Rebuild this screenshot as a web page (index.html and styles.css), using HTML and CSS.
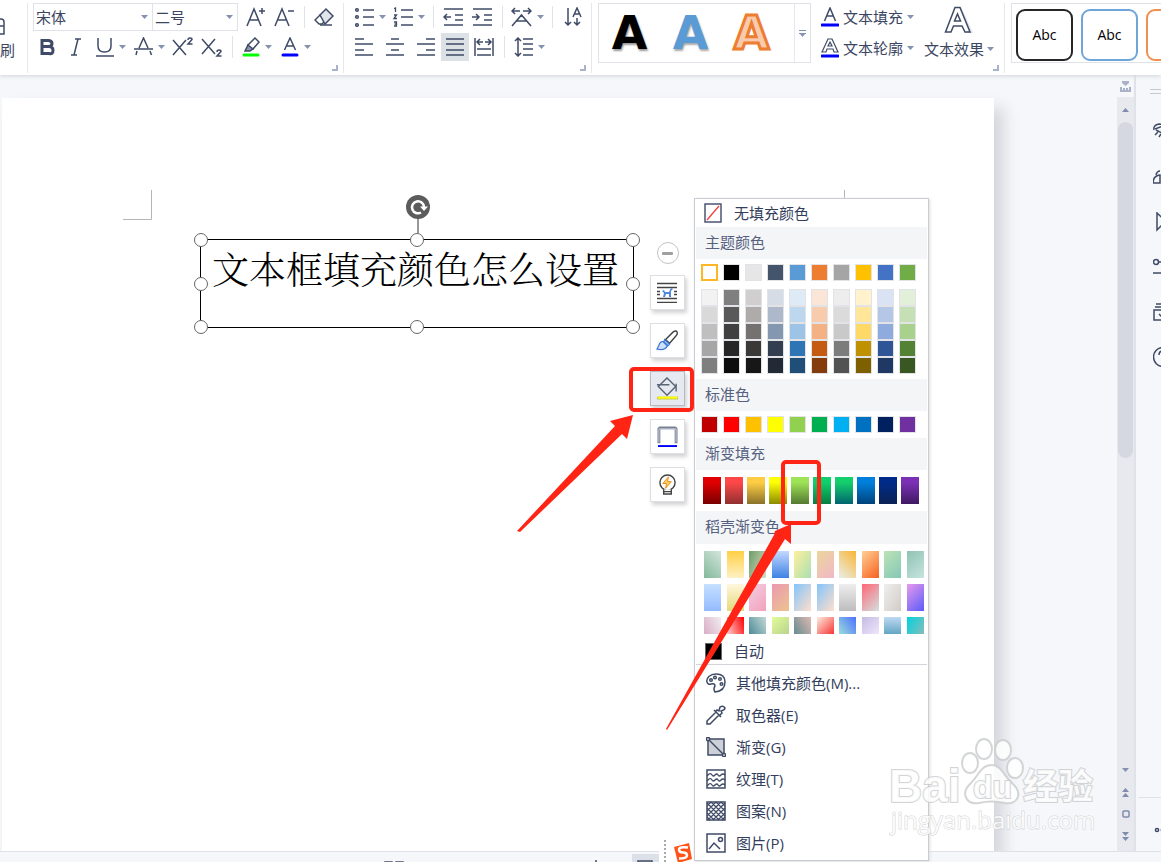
FILE: index.html
```html
<!DOCTYPE html>
<html lang="zh-CN">
<head>
<meta charset="utf-8">
<title>文本框填充颜色</title>
<link rel="stylesheet" href="styles.css">
</head>
<body>
<svg class="defs" width="0" height="0" aria-hidden="true">
  <defs>
    <symbol id="caret" viewBox="0 0 7 4"><path d="M0 0h7L3.500 4z" fill="#8492b0"/></symbol>
    <symbol id="corner" viewBox="0 0 6 6"><path d="M5 0v5H0" fill="none" stroke="#a9b4cc" stroke-width="2"/></symbol>
  </defs>
</svg>

<header class="ribbon">
  <div class="group clip">
    <svg class="ic" width="6" height="20" viewBox="0 0 6 20"><path d="M0 2h1q3 0 3 3v12H0M0 9h4" /></svg>
    <span class="clip-label">刷</span>
  </div>

  <div class="group font">
    <div class="row font-top">
      <label class="combo"><select aria-label="字体"><option>宋体</option></select><svg width="7" height="4"><use href="#caret"/></svg></label>
      <label class="combo size"><select aria-label="字号"><option>二号</option></select><svg width="7" height="4"><use href="#caret"/></svg></label>
      <button aria-label="增大字号"><svg class="ic" width="20" height="22" viewBox="0 0 20 22"><path d="M1 20L8 3l7 17M4 14h8M13 5h6M16 2v6"/></svg></button>
      <button aria-label="减小字号"><svg class="ic" width="20" height="22" viewBox="0 0 20 22"><path d="M1 20L8 3l7 17M4 14h8M14 5h6"/></svg></button>
      <i class="sep"></i>
      <button aria-label="清除格式"><svg class="ic" width="20" height="20" viewBox="0 0 20 20"><path d="M6 8l5 6-3 3H5l-4-4z" fill="#fff"/><path d="M6 8l6-6 7 7-8 8z" fill="#e1e4e9"/><path d="M6 18h12"/></svg></button>
    </div>
    <div class="row font-bottom">
      <button aria-label="加粗"><svg class="ic" width="16" height="20" viewBox="0 0 16 20"><path d="M3 3.500h6q4 0 4 3t-4 3H3h7q4 0 4 4t-4 3H3z" stroke-width="3"/></svg></button>
      <button aria-label="倾斜"><svg class="ic" width="12" height="20" viewBox="0 0 12 20"><path d="M5 2h6M1 18h6M8 2L4 18"/></svg></button>
      <button aria-label="下划线"><svg class="ic" width="19" height="20" viewBox="0 0 19 20"><path d="M3 1v8q0 6 6.500 6t6.500-6V1M1 19h18"/></svg><svg width="7" height="4"><use href="#caret"/></svg></button>
      <button aria-label="删除线"><svg class="ic" width="19" height="20" viewBox="0 0 19 20"><path d="M0 12h19M5 11l4.500-10L14 11M3 14l-1 4M16 14l1.500 4"/></svg><svg width="7" height="4"><use href="#caret"/></svg></button>
      <button aria-label="上标"><svg class="ic" width="21" height="20" viewBox="0 0 21 20"><path d="M1 3l13 15M14 3L1 18"/><path d="M16 3q0-2 2-2t2 1.500L16 7h4.500"/></svg></button>
      <button aria-label="下标"><svg class="ic" width="21" height="20" viewBox="0 0 21 20"><path d="M1 2l13 15M14 2L1 17"/><path d="M16 15q0-2 2-2t2 1.500L16 19h4.500"/></svg></button>
      <i class="sep"></i>
      <button aria-label="突出显示"><svg class="ic" width="18" height="20" viewBox="0 0 18 20"><path d="M13 1l4 4-6 7H6V8z"/><path d="M6 8l5 4-3 2H3z" fill="#8d95a5"/><path d="M2 18h14" stroke="#0f0" stroke-width="3" stroke-linecap="round"/></svg><svg width="7" height="4"><use href="#caret"/></svg></button>
      <button aria-label="字体颜色"><svg class="ic" width="18" height="20" viewBox="0 0 18 20"><path d="M3.500 13L9 1l5.500 12M6 9h6"/><path d="M2 18h14" stroke="#00f" stroke-width="3" stroke-linecap="round"/></svg><svg width="7" height="4"><use href="#caret"/></svg></button>
    </div>
    <svg class="launcher" width="6" height="6"><use href="#corner"/></svg>
  </div>

  <div class="group para">
    <div class="row para-top">
      <button aria-label="项目符号"><svg class="ic" width="19" height="20" viewBox="0 0 19 20"><path d="M8 3h11M8 10h11M8 18h11"/><circle cx="2" cy="3" r="1.300"/><circle cx="2" cy="10" r="1.300"/><circle cx="2" cy="18" r="1.300"/></svg><svg width="7" height="4"><use href="#caret"/></svg></button>
      <button aria-label="编号"><svg class="ic" width="20" height="20" viewBox="0 0 20 20"><path d="M8 3h12M8 10h12M8 18h12"/><path d="M1 1.500L2.500 1v4M1 8h2.500L1 11.500h3M1 15h2.500v4H1M1.500 17h2" stroke-width="1.300"/></svg><svg width="7" height="4"><use href="#caret"/></svg></button>
      <i class="sep"></i>
      <button aria-label="减少缩进"><svg class="ic" width="20" height="18" viewBox="0 0 20 18"><path d="M1 1h19M12 7h8M12 12h8M1 17h19M8 9H1m3-3L1 9l3 3"/></svg></button>
      <button aria-label="增加缩进"><svg class="ic" width="20" height="18" viewBox="0 0 20 18"><path d="M1 1h19M12 7h8M12 12h8M1 17h19M0 9h7M4 6l3 3-3 3"/></svg></button>
      <i class="sep"></i>
      <button aria-label="中文版式"><svg class="ic" width="21" height="20" viewBox="0 0 21 20"><path d="M1 19L10.500 8 20 19M5 14h11M9 4H1m3-3L1 4l3 3M12 4h8m-3-3l3 3-3 3"/></svg><svg width="7" height="4"><use href="#caret"/></svg></button>
      <i class="sep"></i>
      <button aria-label="排序"><svg class="ic" width="18" height="20" viewBox="0 0 18 20"><path d="M4 1v17M1 15l3 3 3-3M9 10l4-9 4 9M10 7h6M13 11v7M10 15l3 3 3-3"/></svg></button>
    </div>
    <div class="row para-bottom">
      <button aria-label="左对齐"><svg class="ic" width="19" height="18" viewBox="0 0 19 18"><path d="M0 1h9M0 6h18M0 12h9M0 17h18"/></svg></button>
      <button aria-label="居中"><svg class="ic" width="19" height="18" viewBox="0 0 19 18"><path d="M5 1h8M0 6h18M5 12h8M0 17h18"/></svg></button>
      <button aria-label="右对齐"><svg class="ic" width="19" height="18" viewBox="0 0 19 18"><path d="M9 1h9M0 6h18M9 12h9M0 17h18"/></svg></button>
      <button class="on" aria-label="两端对齐" aria-pressed="true"><svg class="ic" width="18" height="18" viewBox="0 0 18 18"><path d="M0 1h18M0 6h18M0 12h18M0 17h18"/></svg></button>
      <button aria-label="分散对齐"><svg class="ic" width="20" height="18" viewBox="0 0 20 18"><path d="M1 0v18M19 0v18M3 11h14M3 17h14M9 4H3m3-3L3 4l3 3M11 4h6m-3-3l3 3-3 3"/></svg></button>
      <i class="sep"></i>
      <button aria-label="行距"><svg class="ic" width="19" height="20" viewBox="0 0 19 20"><path d="M4 1v18M1 4l3-3 3 3M1 16l3 3 3-3M9 2h10M9 7h10M9 12h10M9 18h10"/></svg><svg width="7" height="4"><use href="#caret"/></svg></button>
    </div>
    <svg class="launcher" width="6" height="6"><use href="#corner"/></svg>
  </div>

  <div class="group art">
    <div class="gallery">
      <button class="wa black">A</button>
      <button class="wa blue">A</button>
      <button class="wa orange">A</button>
      <button class="more" aria-label="更多"><svg width="7" height="7" viewBox="0 0 7 7"><path d="M0 .5h7M0 3.500h7" stroke="#8492b0"/><path d="M1 4h5L3.500 7z" fill="#8492b0"/></svg></button>
    </div>
    <div class="stack">
      <button><svg class="ic" width="18" height="20" viewBox="0 0 18 20"><path d="M3.500 14L9 1l5.500 13M6 9h6"/><path d="M1 18h16" stroke="#00f" stroke-width="3" stroke-linecap="round"/></svg><span>文本填充</span><svg width="7" height="4"><use href="#caret"/></svg></button>
      <button><svg class="ic" width="18" height="20" viewBox="0 0 18 20"><path d="M1 14L7 1h4l6 13h-4l-1-3H6l-1 3z" stroke-width="1.200"/><path d="M7 8l2-4 2 4z" stroke-width="1.200"/><path d="M1 18h16" stroke="#00f" stroke-width="3" stroke-linecap="round"/></svg><span>文本轮廓</span><svg width="7" height="4"><use href="#caret"/></svg></button>
    </div>
    <button class="effect">
      <svg width="30" height="28" viewBox="0 0 30 28"><path d="M17 1l12 26h-8l-7-24z" fill="#e0e2e7"/><path d="M1.500 26L11 1.500h5L26 26h-5l-3-6H9.500L7 26zM10.500 15h6l-3-7z" fill="#fff" stroke="#3f4b66" stroke-width="1.500"/></svg>
      <span class="effect-label">文本效果<svg width="7" height="4"><use href="#caret"/></svg></span>
    </button>
    <svg class="launcher" width="6" height="6"><use href="#corner"/></svg>
  </div>

  <div class="group styles">
    <div class="shape-list">
      <button class="shape dark">Abc</button>
      <button class="shape sky">Abc</button>
      <button class="shape sun" aria-label="橙色样式"></button>
    </div>
  </div>
</header>

<main class="work">
  <section class="desk"><div class="page"></div></section>
  <div class="scroll">
    <button class="ruler" aria-label="标尺"><svg width="11" height="11" viewBox="0 0 11 11"><path d="M2 0h7v2L5.500 5 2 2z" fill="#a9b2c8"/><path d="M1 6v4h9V6M4 7v3M7 7v3" fill="none" stroke="#a9b2c8" stroke-width="2"/></svg></button>
    <div class="track">
      <button aria-label="向上"><svg width="7" height="4" viewBox="0 0 7 4"><path d="M0 4h7L3.500 0z" fill="#7f8cab"/></svg></button>
      <div class="thumb"></div>
      <div class="track-end">
        <button aria-label="向下"><svg width="7" height="4"><use href="#caret"/></svg></button>
        <button aria-label="上一页"><svg width="7" height="9" viewBox="0 0 7 9"><path d="M0 4h7L3.500 0zM0 9h7L3.500 5z" fill="#7f8cab"/></svg></button>
        <button aria-label="选择浏览对象"><svg width="8" height="8" viewBox="0 0 8 8"><rect x="1" y="1" width="6" height="6" rx="1" fill="none" stroke="#7f8cab" stroke-width="1.500"/></svg></button>
        <button aria-label="下一页"><svg width="7" height="9" viewBox="0 0 7 9"><path d="M0 0h7L3.500 4zM0 5h7L3.500 9z" fill="#7f8cab"/></svg></button>
      </div>
    </div>
  </div>
  <aside class="side">
    <div class="grip"></div>
    <button aria-label="样式"><svg class="ic" width="20" height="20" viewBox="0 0 20 20"><path d="M1 8q-1-5 5-6l7 1M2 7l8-3M3 8l6 3M2 13l3-3M6 15l2-3"/></svg></button>
    <button aria-label="形状"><svg class="ic" width="20" height="20" viewBox="0 0 20 20"><path d="M0 16q0-7 7-8v8zM3 8q1-4 4-4"/></svg></button>
    <button aria-label="选择"><svg class="ic" width="20" height="20" viewBox="0 0 20 20"><path d="M4 1v17l5-5h8z"/></svg></button>
    <button aria-label="设置"><svg class="ic" width="20" height="20" viewBox="0 0 20 20"><circle cx="3" cy="5" r="2.500"/><path d="M6 5h13M0 16h19"/></svg></button>
    <button aria-label="素材"><svg class="ic" width="20" height="20" viewBox="0 0 20 20"><path d="M3 2h14M2 5h16M1 8h18v10H1zM6 12l4 4"/></svg></button>
    <button aria-label="帮助"><svg class="ic" width="20" height="20" viewBox="0 0 20 20"><circle cx="10" cy="10" r="9.500"/><path d="M6 8q0-4 4-4"/></svg></button>
    <button class="last" aria-label="更多"><svg class="ic" width="20" height="20" viewBox="0 0 20 20"><circle cx="6" cy="10" r="1.600"/><circle cx="12" cy="10" r="1.600"/></svg></button>
  </aside>
</main>

<footer class="status">
  <svg class="ic book" width="20" height="12" viewBox="0 0 20 12"><path d="M1 12V2h7l2 2 2-2h7v10M10 4v8"/></svg>
  <svg class="ic" width="20" height="12" viewBox="0 0 20 12"><path d="M10 0v12M3 4v1M17 4v1"/></svg>
  <span class="view"><svg class="ic" width="16" height="12" viewBox="0 0 16 12"><path d="M1 12V2h14v10"/></svg></span>
  <span class="ime"><i></i><svg width="20" height="20" viewBox="0 0 20 20"><path d="M1 4l15-4 3 16-14 4z" fill="#ff5318"/><path d="M15 4.500q-9-1-9 2t4 3 4 3-8 3" fill="none" stroke="#fff" stroke-width="2.500"/></svg></span>
</footer>

<div class="layer">
  <svg class="marks" width="724" height="31" viewBox="0 0 724 31"><path d="M28.500 0v29.500H0M721.500 0v29" fill="none" stroke="#b5b5b5"/></svg>
  <div class="textbox">
    <p>文本框填充颜色怎么设置</p>
    <svg class="rotate" width="24" height="38" viewBox="0 0 24 38"><path d="M12 22v16" stroke="#333"/><circle cx="12" cy="12" r="12" fill="#5c5c5c"/><path d="M15 17.500A6 6 0 1 1 18 12" fill="none" stroke="#fff" stroke-width="2.500"/><path d="M14 11.500h8L18 16z" fill="#fff"/></svg>
    <i class="h nw"></i><i class="h n"></i><i class="h ne"></i><i class="h w"></i><i class="h e"></i><i class="h sw"></i><i class="h s"></i><i class="h se"></i>
  </div>

  <div class="quick">
    <button class="collapse" aria-label="收起"></button>
    <button class="tool" aria-label="布局选项"><svg width="21" height="21" viewBox="0 0 21 21"><path d="M0 1.500h20M0 5.500h20M0 9.500h3M17 9.500h3M0 12.500h3M17 12.500h3M0 16.500h20M0 20.500h20" stroke="#444" stroke-width="1.300"/><path d="M5 9l2-1 1 2h4l2-4 2 1-2 2v6h-2v-3H9l-1 3H6l1-4z" fill="#4f86e0"/></svg></button>
    <button class="tool" aria-label="格式刷"><svg width="23" height="21" viewBox="0 0 24 22"><path d="M10 10l8-8q3-2 4 0t-1 4l-7 8z" fill="#fff" stroke="#444" stroke-width="1.500"/><path d="M9 10l5 5-2 2-4-4zM8 12q-4 0-5 4l-2 4q9 2 11-4z" fill="#cfe0fa" stroke="#3f78d8" stroke-width="1.300"/></svg></button>
    <button class="tool active" aria-label="形状填充"><svg width="23" height="23" viewBox="0 0 24 24"><path d="M11.500 1l9 9-9 9-9-9zM1 8h13M21 7v8" fill="none" stroke="#596579" stroke-width="1.500"/><path d="M1 22h22" stroke="#c9cc55" stroke-width="3"/><path d="M2 21.500h20" stroke="#ff0" stroke-width="2"/></svg></button>
    <button class="tool" aria-label="形状轮廓"><svg width="21" height="21" viewBox="0 0 22 22"><path d="M2 18V3l1-1h16l1 1v15" fill="none" stroke="#788294" stroke-width="3"/><path d="M2 17V3h18v14" fill="none" stroke="#c9ced7"/><path d="M1 21h20" stroke="#00f" stroke-width="2"/></svg></button>
    <button class="tool" aria-label="更多设置"><svg width="19" height="21" viewBox="0 0 20 22"><circle cx="10" cy="9" r="8" fill="none" stroke="#444" stroke-width="1.500"/><path d="M11 3L5 10h4l-1 5 6-7h-4z" fill="#ffd45c" stroke="#e58a1c"/><path d="M6 16v5h8v-5M6 18.500h8" fill="#fff" stroke="#444" stroke-width="1.500"/></svg></button>
  </div>

  <div class="menu">
    <button class="none"><svg width="18" height="20" viewBox="0 0 18 20"><path d="M1 1h16v18H1z" fill="#fff" stroke="#4c5672" stroke-width="1.500"/><path d="M3 17L15 3" stroke="#f04040" stroke-width="1.300"/></svg>无填充颜色</button>
    <h2>主题颜色</h2>
    <div class="theme"><div class="swatches" id="theme"></div><div class="swatches tints" id="tints"></div></div>
    <h2>标准色</h2>
    <div class="standard"><div class="swatches" id="standard"></div></div>
    <h2>渐变填充</h2>
    <div class="blend" id="blend"></div>
    <h2 class="tall">稻壳渐变色</h2>
    <div class="docer" id="docer"></div>
    <button class="auto"><i></i>自动</button>
    <ul>
      <li><button><svg class="ic" width="20" height="20" viewBox="0 0 20 20"><path d="M10 1C4 1 0 5 1 9q1 3 4 2 4-1 4 2-2 3 0 6 10-1 10-10 0-8-9-8z"/><circle cx="5" cy="7" r="1.300"/><circle cx="9" cy="4.500" r="1.300"/><circle cx="14" cy="6" r="1.300"/><circle cx="15.500" cy="11" r="1.300"/></svg>其他填充颜色(M)...</button></li>
      <li><button><svg class="ic" width="20" height="20" viewBox="0 0 20 20"><path d="M10 7L1 16v3h3l9-9M8 5l7 7M10 6l1-1 2 1 1-4q3-2 5 1 0 2-4 3l1 2-2 2"/></svg>取色器(E)</button></li>
      <li><button><svg class="ic" width="20" height="20" viewBox="0 0 20 20"><path d="M2 2h16v16H2z" fill="#cdd0d7"/><path d="M2 2l16 16"/><circle cx="2" cy="2" r="1.600" fill="#fff"/><circle cx="18" cy="18" r="1.600" fill="#fff"/></svg>渐变(G)</button></li>
      <li><button><svg class="ic" width="20" height="20" viewBox="0 0 20 20"><path d="M1 1h18v18H1z"/><path d="M1 7l2-2q2-1 3 1t3 0 3 0 3 0 4 0M1 12l2-2q2-1 3 1t3 0 3 0 3 0 4 0M1 17l2-2q2-1 3 1t3 0 3 0 3 0 4 0" stroke-width="1.300"/></svg>纹理(T)</button></li>
      <li><button><svg class="ic" width="20" height="20" viewBox="0 0 20 20"><path d="M1 1h18v18H1z"/><path d="M1 5l4-4M1 10l9-9M1 15L15 1M2 19L19 2M7 19L19 7M12 19l7-7M16 19l3-3M15 1l4 4M10 1l9 9M5 1l14 14M1 2l17 17M1 7l12 12M1 12l7 7M1 16l3 3" stroke-width="1.300"/></svg>图案(N)</button></li>
      <li><button><svg class="ic" width="20" height="20" viewBox="0 0 20 20"><path d="M1 1h18v18H1z"/><path d="M3 16l5-6 6 6"/><circle cx="14.500" cy="6.500" r="2"/></svg>图片(P)</button></li>
    </ul>
  </div>

  <svg class="watermark" width="214" height="104" viewBox="0 0 214 104">
    <g fill="#fff" fill-opacity=".85" stroke="#c8cacc" stroke-opacity=".8" stroke-width="2">
      <ellipse cx="81" cy="29" rx="8" ry="10"/><ellipse cx="95" cy="15" rx="8" ry="10"/><ellipse cx="114" cy="16" rx="8" ry="10"/><ellipse cx="126" cy="34" rx="8" ry="10"/>
      <path d="M103 31c9 0 12 11 20 18 12 11 5 22-7 20q-13-3-26 0c-13 2-19-10-8-20 8-8 10-18 21-18z"/>
      <g paint-order="stroke">
        <text class="wm-bai" x="0" y="68">Bai</text>
        <text class="wm-du" x="84" y="64">du</text>
        <text class="wm-cn" x="134" y="65">经验</text>
        <text class="wm-url" x="2" y="95">jingyan.baidu.com</text>
      </g>
    </g>
  </svg>

  <svg class="notes" width="310" height="375" viewBox="0 0 310 375">
    <g transform="translate(-515 -360)">
      <g fill="none" stroke="#ff2414" stroke-width="4"><rect x="631" y="369" width="61" height="41" rx="3"/><rect x="783" y="462" width="36" height="61" rx="3"/></g>
      <path d="M517 531l98-105-5-5 23-6-6 24-5-5-102 98zM666 729l108-194 1-4 16-7v20l-6-5L667 730z" fill="#ff2414"/>
    </g>
  </svg>
</div>
<script src="app.js"></script>
</body>
</html>
```
FILE: styles.css
```css
* { box-sizing: border-box; }
body {
  margin: 0; height: 100vh; display: flex; flex-direction: column;
  position: relative; overflow: hidden; background: #f5f7fa; color: #3c4663;
  font: 15px/20px "Open Sans", "Noto Sans CJK SC", sans-serif;
}
button { border: 0; background: none; padding: 0; color: inherit; font: inherit; text-align: left; display: flex; align-items: center; }
svg { display: block; flex: none; }
.defs { position: absolute; }
.ic { fill: none; stroke: #3f4b66; stroke-width: 1.5; }

.ribbon { flex: none; display: flex; height: 75px; background: #fff; box-shadow: 0 1px 4px #cfd2d8; position: relative; padding-top: 3px; }
.group { flex: none; position: relative; border-right: 1px solid #e6e8ed; height: 70px; }
.clip { width: 28px; padding-top: 14px; }
.clip-label { display: block; margin-top: 3px; }
.font { width: 316px; padding-left: 5px; }
.row { display: grid; align-items: center; height: 28px; }
.row button { gap: 5px; }
.font-top { grid-template-columns: 120px 93px 28px 30px 10px 20px; }
.font-bottom { grid-template-columns: 31px 25px 39px 38px 29px 31px 10px 39px 30px; padding-left: 6px; margin-top: 2px; }
.combo { display: flex; align-items: center; border: 1px solid #dfe2e7; height: 28px; padding-right: 4px; }
.combo.size { width: 86px; margin-left: -1px; }
.combo select { flex: 1; min-width: 0; border: 0; padding: 0 2px; appearance: none; background: none; color: inherit; font: inherit; }
.sep { width: 1px; height: 22px; background: #dfe2e9; }
.launcher { position: absolute; right: 5px; bottom: 2px; }
.para { width: 248px; padding-left: 11px; }
.para-top { grid-template-columns: 38px 40px 10px 29px 30px 9px 41px 12px 18px; }
.para-bottom { grid-template-columns: 31px 31px 24px 33px 30px 10px 40px; margin-top: 2px; }
.row .on { background: #dce1e6; width: 28px; height: 28px; justify-content: center; }

.art { width: 413px; display: flex; padding-left: 6px; }
.gallery { width: 213px; height: 60px; border: 1px solid #dfe2e7; display: grid; grid-template-columns: 61px 61px 61px 1fr; }
.wa { justify-content: center; font: bold 46px/58px "DejaVu Sans", sans-serif; }
.black { color: #000; text-shadow: 1px 2px 2px #999; }
.blue { color: #5b9bd5; text-shadow: 1px 2px 2px #aaa; }
.orange { color: #f8cbad; -webkit-text-stroke: 3px #ed7d31; }
.more { border-left: 1px solid #e6e8ed; justify-content: center; justify-self: end; width: 16px; }
.stack { display: flex; flex-direction: column; padding-left: 10px; gap: 3px; }
.stack button { height: 28px; gap: 4px; }
.effect { flex-direction: column; margin-left: 10px; padding-top: 3px; height: 58px; gap: 5px; }
.effect-label { display: flex; align-items: center; gap: 3px; }
.styles { flex: 1; min-width: 0; padding-left: 6px; overflow: hidden; border: 0; }
.shape-list { display: flex; gap: 8px; width: 240px; height: 60px; padding: 5px 4px; border: 1px solid #dfe2e7; }
.shape { flex: none; width: 57px; height: 52px; border: 2px solid; border-radius: 9px; justify-content: center; font: 14px/20px "Open Sans", sans-serif; }
.dark { border-color: #262626; color: #000; }
.sky { border-color: #6fa6d9; color: #000; }
.sun { border-color: #f09050; color: #000; }

.work { flex: 1; min-height: 0; display: flex; }
.desk { flex: 1; min-width: 0; overflow: hidden; padding: 23px 123px 0 2px; }
.page { height: 100%; background: #fff; box-shadow: 10px 10px 14px #d4d7db; }
.scroll { width: 19px; border-right: 2px solid #e0e2ea; display: flex; flex-direction: column; }
.scroll button { justify-content: center; width: 100%; }
.ruler { height: 22px; padding-top: 1px; }
.track { flex: 1; background: #e8e9ef; display: flex; flex-direction: column; }
.track > button { height: 25px; }
.thumb { height: 336px; margin: 0 1px; border-radius: 8px; background: #d5d8e1; }
.track-end { margin-top: auto; padding-bottom: 4px; }
.track-end button { height: 22px; }
.side { width: 25px; overflow: hidden; display: flex; flex-direction: column; padding-left: 14px; }
.grip { flex: none; height: 5px; margin: 14px 0 15px; border: solid #c6c9d0; border-width: 1px 0; }
.side button { height: 45px; padding-left: 3px; }
.side .last { margin-top: auto; height: 54px; border-top: 1px solid #e0e2ea; padding-top: 10px; margin-left: -12px; padding-left: 13px; }

.status { flex: none; height: 11px; display: flex; align-items: flex-start; border-top: 1px solid #dfe1e8; background: #f5f7fa; padding-left: 384px; }
.status > svg { margin-top: 8px; margin-right: 182px; }
.status .book + svg { margin-right: 26px; }
.view { width: 27px; height: 20px; background: #dce0e8; padding: 5px; margin-top: 2px; }
.ime { display: flex; position: relative; width: 36px; height: 22px; margin-top: -12px; background: #fff; }
.ime i { margin: 0 7px 0 5px; border-left: 2px dotted #aaa; }
.ime svg { margin-top: 3px; }

.layer { position: absolute; inset: 0; pointer-events: none; }
.marks { position: absolute; left: 123px; top: 190px; }
.textbox { position: absolute; left: 200px; top: 239px; width: 434px; height: 89px; border: 1px solid #000; }
.textbox p { margin: 0; padding: 4px 11px; color: #000; white-space: nowrap; font: 300 37px/48px "Noto Serif CJK SC", "Noto Sans CJK SC", serif; }
.rotate { position: absolute; left: 205px; top: -45px; }
.h { position: absolute; width: 14px; height: 14px; border: 1px solid #666; border-radius: 50%; background: #fff; transform: translate(-50%, -50%); }
.nw, .n, .ne { top: 0; }
.w, .e { top: 50%; }
.sw, .s, .se { top: 100%; }
.nw, .w, .sw { left: 0; }
.n, .s { left: 50%; }
.ne, .e, .se { left: 100%; }

.quick { position: absolute; left: 650px; top: 242px; display: flex; flex-direction: column; gap: 13px; align-items: center; }
.collapse { width: 22px; height: 22px; border: 1px solid #c4c4c4; border-radius: 50%; background: #fff; justify-content: center; margin-bottom: -2px; }
.collapse::before { content: ""; width: 11px; height: 3px; border-radius: 1px; background: #a0a0a0; }
.tool { width: 35px; height: 35px; border: 1px solid #dcdfe4; background: #fff; justify-content: center; box-shadow: 2px 3px 4px #d3d3d3; }
.tool.active { background: #e6e9ef; border-color: #b5bac4; }

.menu { position: absolute; left: 694px; top: 198px; width: 235px; height: 663px; border: 1px solid #c9ccd2; background: #fff; box-shadow: 1px 1px 3px #ddd; color: #333d5c; }
.menu h2 { margin: 0 1px; padding-left: 9px; height: 32px; background: #f3f5f7; color: #56617f; font: inherit; line-height: 30px; }
.menu h2.tall { height: 33px; }
.none { height: 28px; width: 100%; padding-left: 9px; gap: 12px; }
.theme { height: 120px; padding: 5px 6px; display: flex; flex-direction: column; gap: 8px; }
.standard { height: 27px; padding: 5px 6px; }
.swatches { display: grid; grid-template-columns: repeat(10, 17px); column-gap: 5px; }
.swatches button { height: 17px; border: 1px solid #e2e3e7; }
.swatches .picked { border: 2px solid #ffb624; }
.blend { height: 41px; padding: 7px 8px; display: grid; grid-template-columns: repeat(10, 18px); gap: 4px; }
.docer { height: 90px; padding: 7px 1px 0 9px; width: 230px; display: grid; grid-template-columns: repeat(10, 17px); grid-template-rows: 27px 27px 17px; row-gap: 6px; justify-content: space-between; }
.auto { height: 30px; width: 100%; padding: 4px 0 0 10px; gap: 12px; }
.auto i { width: 17px; height: 17px; background: #000; border: 1px solid #666; }
.menu ul { margin: 0 1px; padding: 2px 0 0; border-top: 1px solid #d3d5da; list-style: none; }
.menu li button { height: 32px; width: 100%; padding-left: 10px; gap: 10px; }

.watermark { position: absolute; left: 889px; top: 734px; }
.wm-bai { font: bold 46px "Liberation Sans", sans-serif; }
.wm-du { font: bold 32px "Liberation Sans", sans-serif; }
.wm-cn { font: bold 35px "Noto Sans CJK SC", sans-serif; }
.wm-url { font: 24px "Open Sans", sans-serif; stroke-width: 1px; }
.notes { position: absolute; left: 515px; top: 360px; }
```
FILE: app.js
```js
const theme = ["#fff", "#000", "#e7e6e6", "#44546a", "#5b9bd5", "#ed7d31", "#a5a5a5", "#ffc000", "#4472c4", "#70ad47"];
const tints = [
  "#f2f2f2", "#7f7f7f", "#d0cece", "#d6dce5", "#deebf7", "#fbe5d6", "#ededed", "#fff2cc", "#dae3f3", "#e2f0d9",
  "#d9d9d9", "#595959", "#afabab", "#adb9ca", "#bdd7ee", "#f8cbad", "#dbdbdb", "#ffe699", "#b4c7e7", "#c5e0b4",
  "#bfbfbf", "#404040", "#767171", "#8497b0", "#9dc3e6", "#f4b183", "#c9c9c9", "#ffd966", "#8faadc", "#a9d18e",
  "#a6a6a6", "#262626", "#3b3838", "#333f50", "#2e75b6", "#c55a11", "#7c7c7c", "#bf9000", "#2f5597", "#548235",
  "#7f7f7f", "#0d0d0d", "#181717", "#222a35", "#1f4e79", "#843c0c", "#525252", "#7f6000", "#203864", "#385723"
];
const standard = ["#c00000", "#f00", "#ffc000", "#ff0", "#92d050", "#00b050", "#00b0f0", "#0070c0", "#002060", "#7030a0"];
const blend = [
  ["#e00000", "#780000"], ["#ff4747", "#903030"], ["#ffcd43", "#8b722b"], ["#ffff08", "#8b8b00"], ["#9ee256", "#537a31"],
  ["#10d06c", "#087d42"], ["#14cf6c", "#00656f"], ["#0080dc", "#00437b"], ["#002b88", "#0b2254"], ["#7b31b5", "#401963"]
].map(c => `linear-gradient(${c[0]}, ${c[0]} 20%, ${c[1]})`);
const docer = [
  [45, "#83b99a", "#d4e5dd"], [180, "#ffd044", "#fff0c4"], [110, "#6e9c64", "#d5dec7"], [180, "#c4d7ff", "#3d83e3"], [120, "#fff09d", "#aadfb1"],
  [135, "#ecd59a", "#f0b8c8"], [45, "#e9eee9", "#f8b635"], [135, "#ffd095", "#f8601f"], [135, "#bde3b5", "#83c7b7"], [135, "#90c2b3", "#c6e5df"],
  [180, "#c5e1ff", "#94baff"], [180, "#fff7dd", "#e6d978"], [135, "#f2cfe1", "#f4a0bd"], [135, "#ec98b1", "#ecc48f"], [125, "#83c4fb", "#ffdfcb"],
  [125, "#83c4fb", "#ffdfcb"], [180, "#eee", "#bdbdbd"], [135, "#ff6575", "#d2e0e0"], [120, "#efefef", "#d1cbc6"], [135, "#e79aed", "#5b5bf8"],
  [65, "#d8aec5", "#f2edf0"], [70, "#ffd0d0", "#f00"], [60, "#4c8b98", "#c3d9d5"], [135, "#e1fc99", "#b9d38e"], [60, "#668b90", "#deb9b2"],
  [135, "#fdeee0", "#f63434"], [55, "#9addda", "#4c70ff"], [135, "#c4bce3", "#f0e5fc"], [180, "#bfd9f2", "#62a6c4"], [120, "#00d2df", "#87bdbb"]
].map(g => `linear-gradient(${g[0]}deg, ${g[1]}, ${g[2]})`);

function fill(id, values) {
  const host = document.getElementById(id);
  values.forEach((value, i) => {
    const b = document.createElement("button");
    b.style.background = value;
    b.setAttribute("aria-label", "颜色 " + (i + 1));
    host.append(b);
  });
}
fill("theme", theme);
fill("tints", tints);
fill("standard", standard);
fill("blend", blend);
fill("docer", docer);
document.querySelector("#theme button").classList.add("picked");
```
